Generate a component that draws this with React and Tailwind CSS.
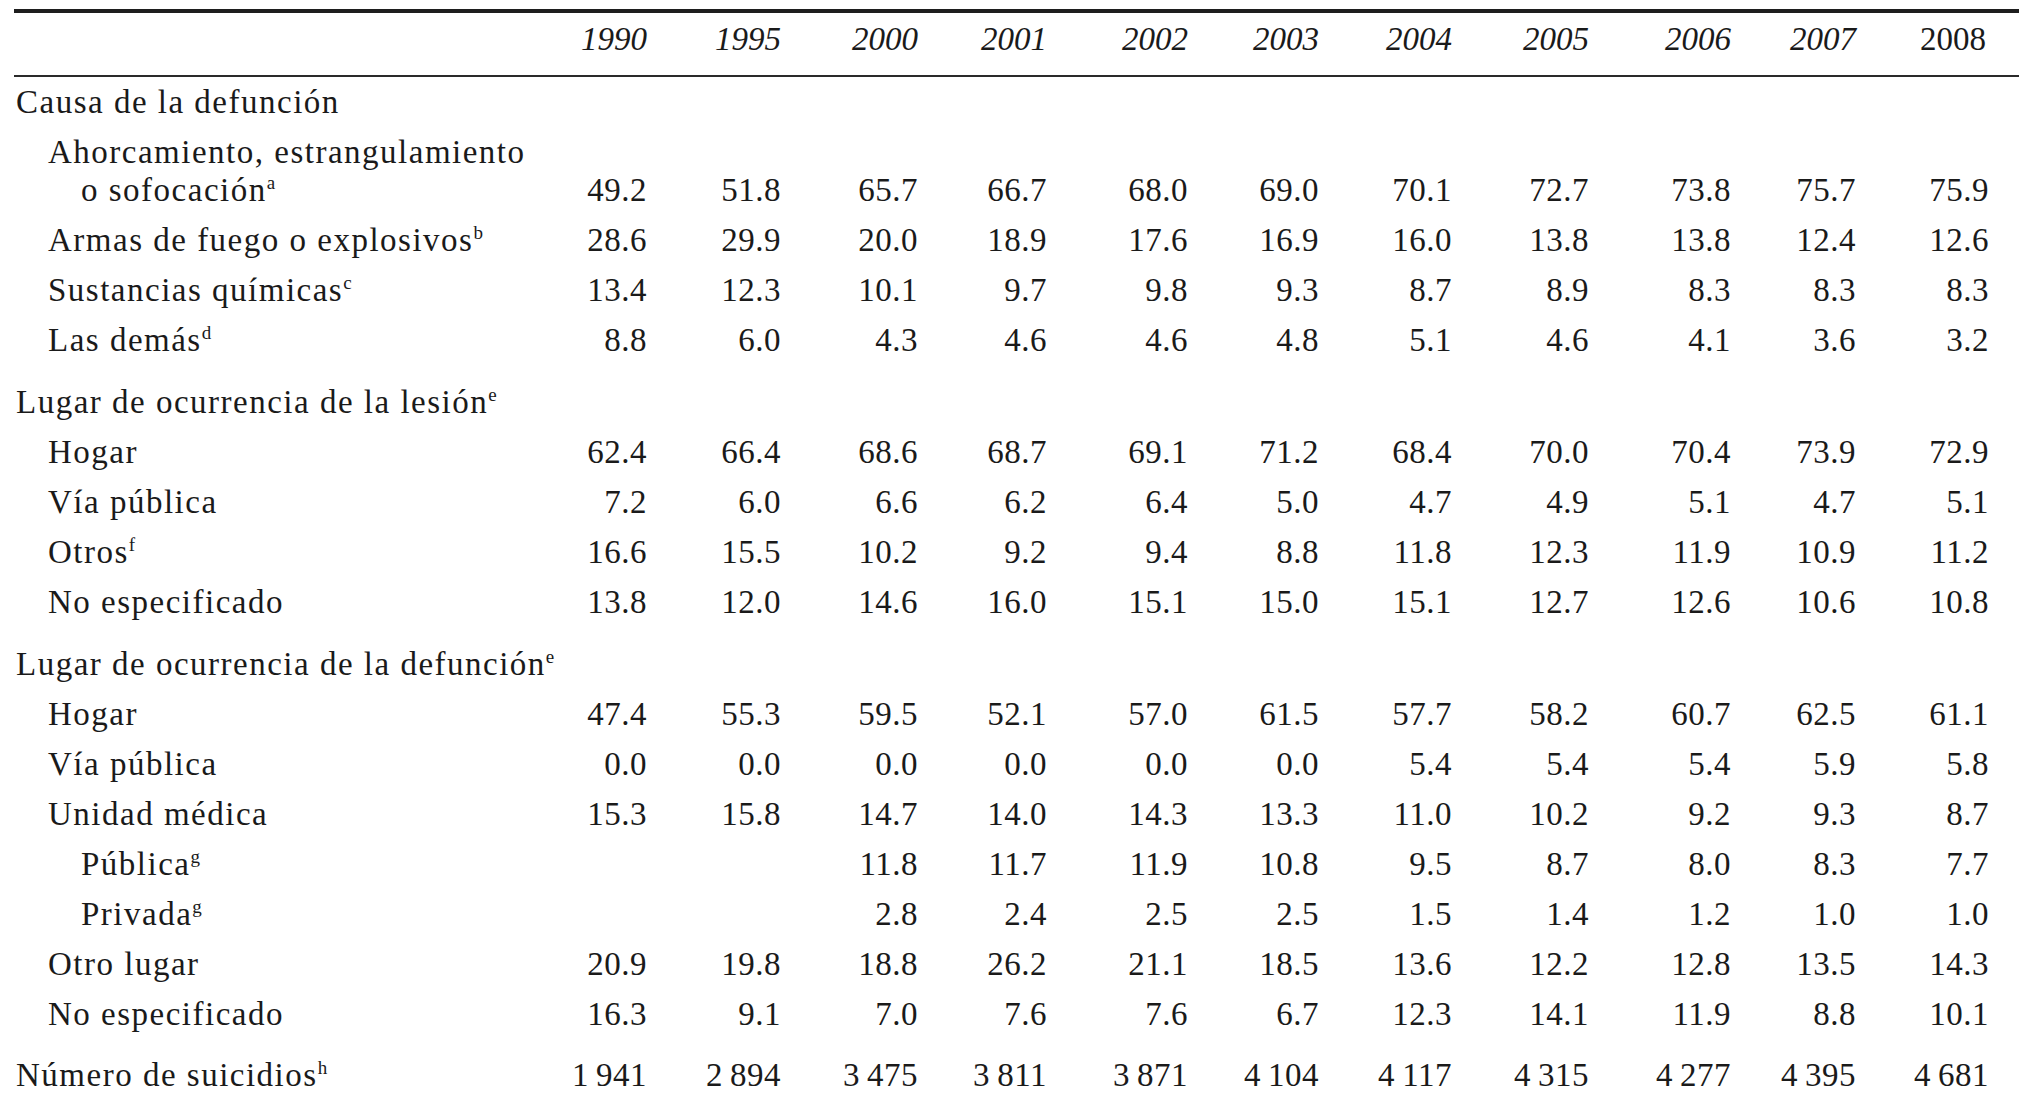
import React from 'react';

const cols = 'grid grid-cols-[526px_107px_134px_137px_129px_141px_131px_133px_137px_142px_125px_133px]';

const years = ['1990', '1995', '2000', '2001', '2002', '2003', '2004', '2005', '2006', '2007', '2008'];

const t = '\u2009';

// level 0 = heading, 1 = item, 2 = sub item
const rows = [
    { level: 0, label: 'Causa de la defunción' },
    { level: 1, label: 'Ahorcamiento, estrangulamiento', label2: 'o sofocación', sup: 'a', values: ['49.2', '51.8', '65.7', '66.7', '68.0', '69.0', '70.1', '72.7', '73.8', '75.7', '75.9'] },
    { level: 1, label: 'Armas de fuego o explosivos', sup: 'b', values: ['28.6', '29.9', '20.0', '18.9', '17.6', '16.9', '16.0', '13.8', '13.8', '12.4', '12.6'] },
    { level: 1, label: 'Sustancias químicas', sup: 'c', values: ['13.4', '12.3', '10.1', '9.7', '9.8', '9.3', '8.7', '8.9', '8.3', '8.3', '8.3'] },
    { level: 1, label: 'Las demás', sup: 'd', values: ['8.8', '6.0', '4.3', '4.6', '4.6', '4.8', '5.1', '4.6', '4.1', '3.6', '3.2'] },
    { level: 0, gap: true, label: 'Lugar de ocurrencia de la lesión', sup: 'e' },
    { level: 1, label: 'Hogar', values: ['62.4', '66.4', '68.6', '68.7', '69.1', '71.2', '68.4', '70.0', '70.4', '73.9', '72.9'] },
    { level: 1, label: 'Vía pública', values: ['7.2', '6.0', '6.6', '6.2', '6.4', '5.0', '4.7', '4.9', '5.1', '4.7', '5.1'] },
    { level: 1, label: 'Otros', sup: 'f', values: ['16.6', '15.5', '10.2', '9.2', '9.4', '8.8', '11.8', '12.3', '11.9', '10.9', '11.2'] },
    { level: 1, label: 'No especificado', values: ['13.8', '12.0', '14.6', '16.0', '15.1', '15.0', '15.1', '12.7', '12.6', '10.6', '10.8'] },
    { level: 0, gap: true, label: 'Lugar de ocurrencia de la defunción', sup: 'e' },
    { level: 1, label: 'Hogar', values: ['47.4', '55.3', '59.5', '52.1', '57.0', '61.5', '57.7', '58.2', '60.7', '62.5', '61.1'] },
    { level: 1, label: 'Vía pública', values: ['0.0', '0.0', '0.0', '0.0', '0.0', '0.0', '5.4', '5.4', '5.4', '5.9', '5.8'] },
    { level: 1, label: 'Unidad médica', values: ['15.3', '15.8', '14.7', '14.0', '14.3', '13.3', '11.0', '10.2', '9.2', '9.3', '8.7'] },
    { level: 2, label: 'Pública', sup: 'g', values: ['', '', '11.8', '11.7', '11.9', '10.8', '9.5', '8.7', '8.0', '8.3', '7.7'] },
    { level: 2, label: 'Privada', sup: 'g', values: ['', '', '2.8', '2.4', '2.5', '2.5', '1.5', '1.4', '1.2', '1.0', '1.0'] },
    { level: 1, label: 'Otro lugar', values: ['20.9', '19.8', '18.8', '26.2', '21.1', '18.5', '13.6', '12.2', '12.8', '13.5', '14.3'] },
    { level: 1, label: 'No especificado', values: ['16.3', '9.1', '7.0', '7.6', '7.6', '6.7', '12.3', '14.1', '11.9', '8.8', '10.1'] },
    { level: 0, total: true, label: 'Número de suicidios', sup: 'h', values: [`1${t}941`, `2${t}894`, `3${t}475`, `3${t}811`, `3${t}871`, `4${t}104`, `4${t}117`, `4${t}315`, `4${t}277`, `4${t}395`, `4${t}681`] },
];

const indent = { 0: 'pl-[2px]', 1: 'pl-[34px]', 2: 'pl-[67px]' };

const Sup = ({ children }) => (
    <sup className="text-[19px] top-[-0.62em] tracking-normal">{children}</sup>
);

const Numbers = ({ values }) => (
    <>
        {values.map((v, i) => (
            <div key={i} className="text-right tracking-[0.5px] whitespace-nowrap">{v}</div>
        ))}
    </>
);

const Row = ({ row }) => {
    const values = row.values || [];

    // two line label, numbers on the last line
    if (row.label2) {
        return (
            <div className={`${cols} items-end pt-[6px] pb-[6px] leading-[38px]`}>
                <div className={`${indent[row.level]} tracking-[1.5px] whitespace-nowrap`}>
                    <div>{row.label}</div>
                    <div className="pl-[33px]">{row.label2}<Sup>{row.sup}</Sup></div>
                </div>
                <Numbers values={values} />
            </div>
        );
    }

    let spacing = '';
    if (row.gap) spacing = 'mt-[12px]';
    if (row.total) spacing = 'mt-[11px]';

    return (
        <div className={`${cols} h-[50px] leading-[50px] ${spacing}`}>
            <div className={`${indent[row.level]} tracking-[1.5px] whitespace-nowrap`}>
                {row.label}
                {row.sup && <Sup>{row.sup}</Sup>}
            </div>
            {values.length > 0 && <Numbers values={values} />}
        </div>
    );
};

export default function App() {
    return (
        <div className="min-h-screen bg-white">
            <div className="ml-[14px] w-[2005px] pt-[9px] text-[33px] text-[#1a1a1a] font-['Liberation_Serif','Times_New_Roman',serif]">
                <div className="h-[4px] bg-[#1e1e1e]" />
                <div className={`${cols} h-[62px] pt-[1px] leading-[50px]`}>
                    <div />
                    {years.map((y) => (
                        <div key={y} className={`text-right ${y === '2008' ? 'pr-[3px]' : 'italic'}`}>{y}</div>
                    ))}
                </div>
                <div className="h-[2px] bg-[#2a2a2a]" />
                {rows.map((row, i) => (
                    <Row key={i} row={row} />
                ))}
            </div>
        </div>
    );
}
